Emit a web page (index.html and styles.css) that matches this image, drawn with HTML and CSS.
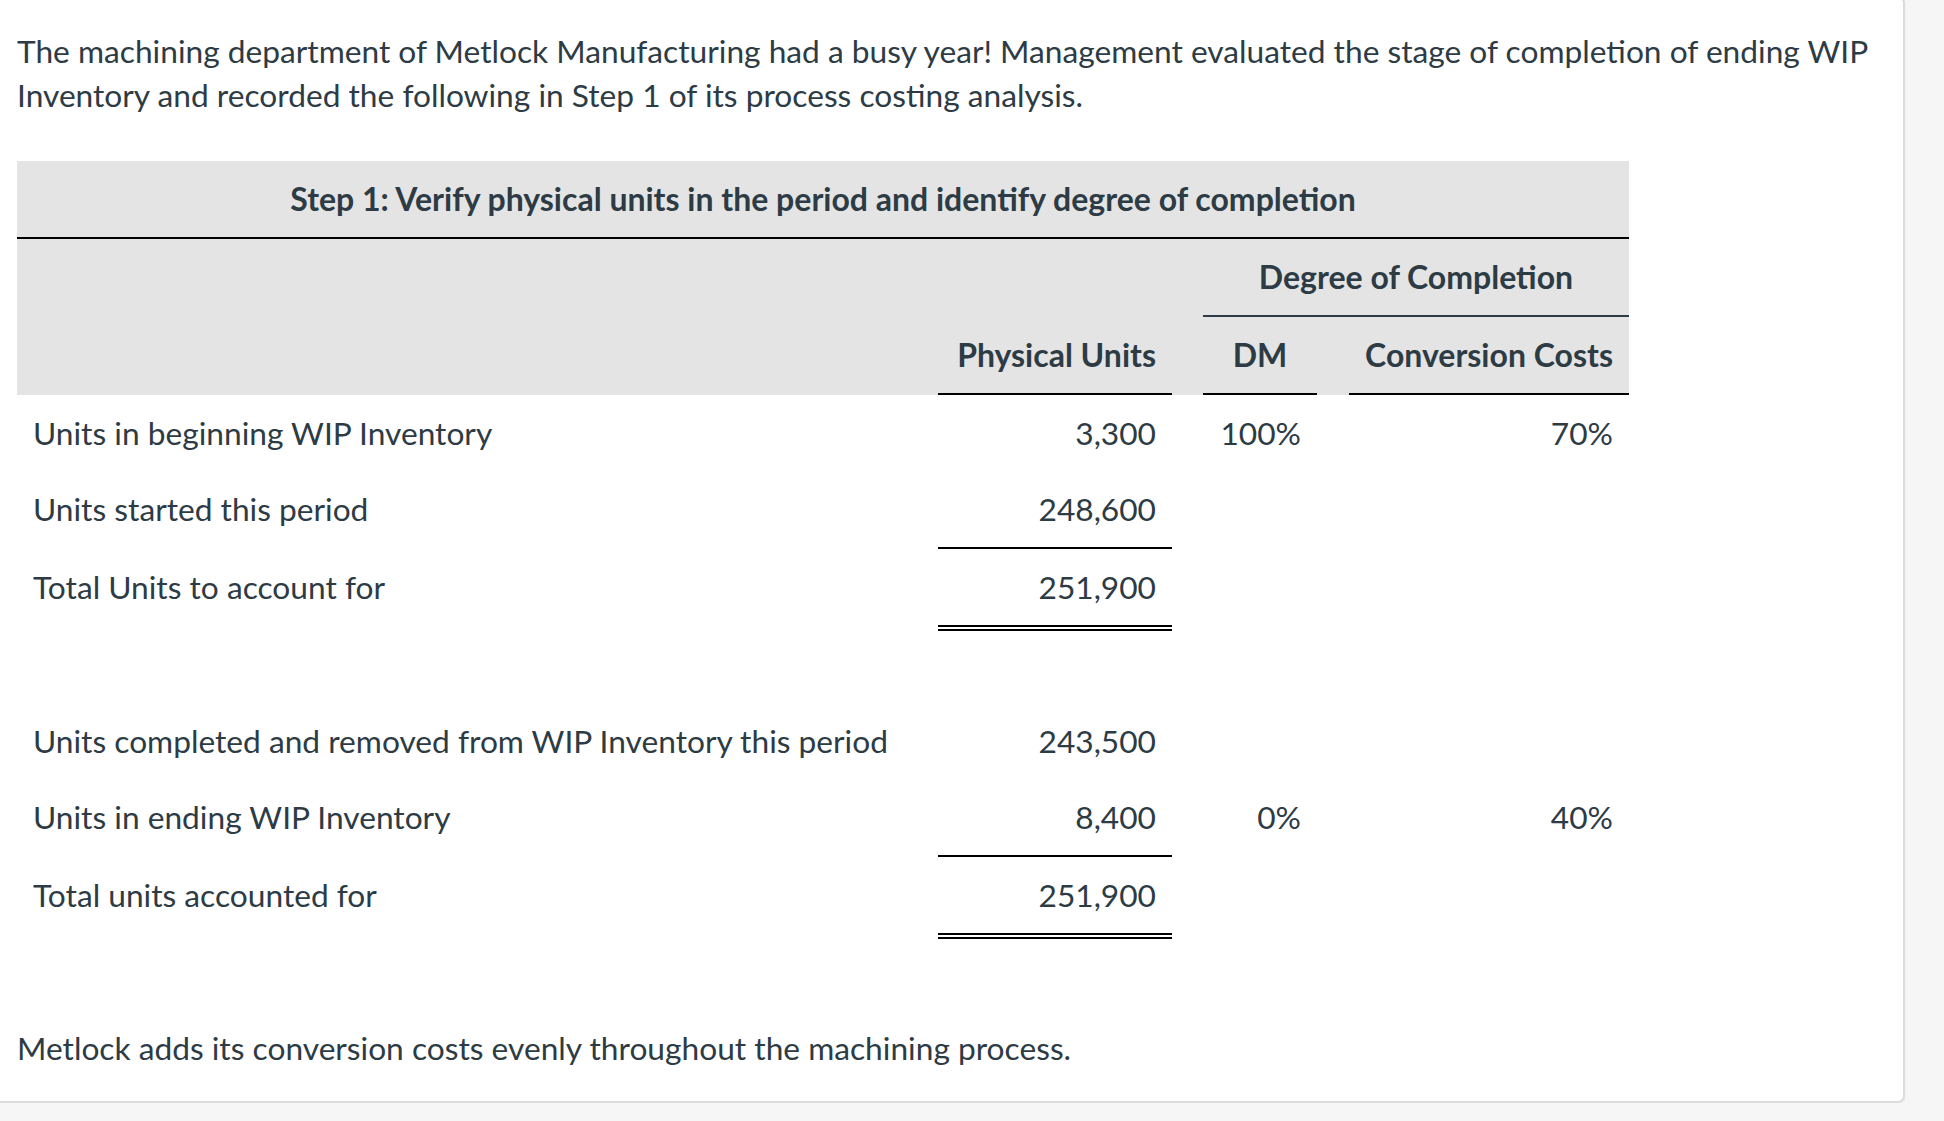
FILE: index.html
```html
<!DOCTYPE html>
<html lang="en">
<head>
<meta charset="utf-8">
<title>Process costing – Step 1</title>
<link rel="stylesheet" href="styles.css">
</head>
<body>
<div class="card">
  <p class="intro">The machining department of Metlock Manufacturing had a busy year! Management evaluated the stage of completion of ending WIP Inventory and recorded the following in Step 1 of its process costing analysis.</p>

  <table class="units">
    <colgroup>
      <col class="c-label">
      <col class="c-pu">
      <col class="c-gap1">
      <col class="c-dm">
      <col class="c-gap2">
      <col class="c-cc">
    </colgroup>
    <thead>
      <tr class="h-title">
        <th colspan="6" class="title">Step 1: Verify physical units in the period and identify degree of completion</th>
      </tr>
      <tr class="h-group">
        <th colspan="3"></th>
        <th colspan="3" class="group">Degree of Completion</th>
      </tr>
      <tr class="h-cols">
        <th></th>
        <th class="num ruled">Physical Units</th>
        <th></th>
        <th class="ctr ruled">DM</th>
        <th></th>
        <th class="ctr ruled">Conversion Costs</th>
      </tr>
    </thead>
    <tbody>
      <tr>
        <td class="label">Units in beginning WIP Inventory</td>
        <td class="num">3,300</td>
        <td></td>
        <td class="num">100%</td>
        <td></td>
        <td class="num">70%</td>
      </tr>
      <tr>
        <td class="label">Units started this period</td>
        <td class="num single">248,600</td>
        <td></td><td></td><td></td><td></td>
      </tr>
      <tr>
        <td class="label">Total Units to account for</td>
        <td class="num double">251,900</td>
        <td></td><td></td><td></td><td></td>
      </tr>
      <tr class="spacer">
        <td colspan="6"></td>
      </tr>
      <tr>
        <td class="label">Units completed and removed from WIP Inventory this period</td>
        <td class="num">243,500</td>
        <td></td><td></td><td></td><td></td>
      </tr>
      <tr>
        <td class="label">Units in ending WIP Inventory</td>
        <td class="num single">8,400</td>
        <td></td>
        <td class="num">0%</td>
        <td></td>
        <td class="num">40%</td>
      </tr>
      <tr>
        <td class="label">Total units accounted for</td>
        <td class="num double">251,900</td>
        <td></td><td></td><td></td><td></td>
      </tr>
    </tbody>
  </table>

  <p class="outro">Metlock adds its conversion costs evenly throughout the machining process.</p>
</div>
</body>
</html>
```

FILE: styles.css
```css
html, body {
  margin: 0;
  padding: 0;
}

body {
  background: #f6f6f6;
  font-family: Lato, "Open Sans", "Liberation Sans", sans-serif;
  color: #2d3b45;
  font-size: 31.7px;
  line-height: 44px;
}

.card {
  margin: -4px 39px 0 -10px;
  padding: 31px 12px 31px 25px;
  background: #ffffff;
  border: 2px solid #dcdcdc;
  border-radius: 7px;
  box-shadow: 0 1px 2px rgba(0, 0, 0, 0.06);
}

.intro {
  margin: 0 0 44px 0;
}

.outro {
  margin: 87px 0 0 0;
}

.units {
  width: 1612px;
  table-layout: fixed;
  border-collapse: separate;
  border-spacing: 0;
}

.c-label { width: 921px; }
.c-pu { width: 234px; }
.c-gap1 { width: 31px; }
.c-dm { width: 114px; }
.c-gap2 { width: 32px; }
.c-cc { width: 280px; }

.units th,
.units td {
  padding: 16px 16px;
  height: 44px;
  vertical-align: top;
  font-weight: 400;
  white-space: nowrap;
}

.units thead th {
  background: #e4e4e4;
  font-size: 32px;
  font-weight: 700;
  border-bottom: 2px solid transparent;
}

.units thead .h-title th {
  text-align: center;
  border-bottom-color: #000000;
}

.units thead .group {
  text-align: center;
  border-bottom-color: #2d3b45;
}

.units thead .ruled {
  border-bottom-color: #000000;
}

.units .num {
  text-align: right;
}

.units .ctr {
  text-align: center;
}

.units .label {
  text-align: left;
}

.units td.single {
  border-bottom: 2px solid #000000;
}

.units td.double {
  border-bottom: 6px double #000000;
}

.units .spacer td {
  padding: 0;
  height: 72px;
}
```
